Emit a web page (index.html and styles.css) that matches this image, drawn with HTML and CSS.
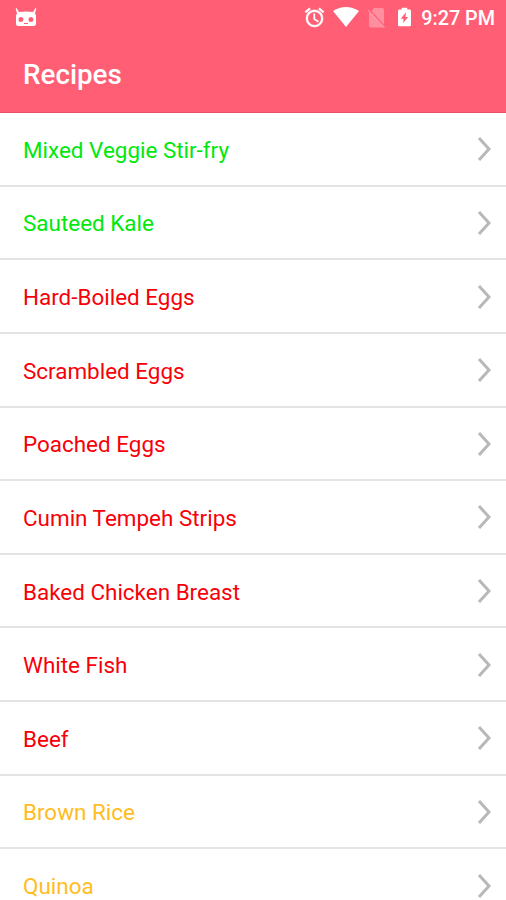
FILE: index.html
```html
<!DOCTYPE html>
<html lang="en">
<head>
<meta charset="utf-8">
<title>Recipes</title>
<link rel="stylesheet" href="styles.css">
</head>
<body>
<header class="header">
  <div class="status">
    <svg class="robot" width="22" height="20" viewBox="0 0 22 20"><path fill="#fff" fill-rule="evenodd" d="M1.500 0L4 4q7-1 14 0l2.500-4 .8.500-1.300 5q1 1 1 3v7q0 2.500-2.500 2.500h-15Q1 18 1 15.500v-7q0-2 1-3L.7.500zM6 9a2.500 2.500 0 100 5 2.500 2.500 0 000-5zm10 0a2.500 2.500 0 100 5 2.500 2.500 0 000-5zM9 15v1h4v-1z"/></svg>
    <div class="status-right">
      <svg class="alarm" width="23" height="23" viewBox="0 0 24 24" fill="#fff"><path stroke="#fff" stroke-width=".4" d="M12 4a9 9 0 100 18 9 9 0 000-18zm0 16a7 7 0 110-14 7 7 0 010 14zM22 5.700l-4.600-3.900-1.300 1.500 4.600 3.900zM7.900 3.400L6.600 1.900 2 5.700l1.300 1.500zM12.500 8H11v6l4.700 2.900.8-1.200-4-2.400z"/></svg>
      <svg class="wifi" width="26" height="20" viewBox="0 0 26 20"><path fill="#fff" d="M0 4Q13-4 26 4L13 20z"/></svg>
      <svg class="sim" width="18" height="20" viewBox="0 0 18 20"><path fill="#fff" opacity=".3" d="M7 0h8q2 0 2 2v14.500L4.500 3zM3 4.500L17 19.500H4q-2 0-2-2V5.500z"/><path d="M1 2l16.500 17.500" stroke="#fff" stroke-opacity=".25" stroke-width="1.500"/></svg>
      <svg class="battery" width="13" height="20" viewBox="0 0 14 20"><path fill="#fff" fill-rule="evenodd" d="M4 0h6v2h2.500q1.500 0 1.500 1.500v15q0 1.500-1.500 1.500h-11Q0 20 0 18.500v-15Q0 2 1.500 2H4zM8.500 5l-5.500 7h3l-.5 4.500L11 10H8z"/></svg>
      <span class="time">9:27 PM</span>
    </div>
  </div>
  <h1>Recipes</h1>
</header>
<ul class="list"></ul>
<script src="script.js"></script>
</body>
</html>
```
FILE: styles.css
```css
* { box-sizing: border-box; }
body { margin: 0; height: 900px; overflow: hidden; background: #fff; font-family: Roboto, sans-serif; }
.header { height: 113px; background: #ff5e75; color: #fff; border-bottom: 1px solid #e8506a; }
.status { height: 36px; padding: 0 11px 0 15px; display: flex; align-items: center; justify-content: space-between; }
.status-right { display: flex; align-items: center; }
.robot { margin-top: -1px; }
.alarm { margin-top: -1px; margin-right: -1px; }
.wifi, .battery { margin-top: -2px; }
.wifi { margin-left: 8px; }
.sim { margin-left: 8px; }
.battery { margin-left: 13px; margin-right: 10px; }
.time { font-size: 19.800px; font-weight: 500; }
h1 { margin: 0; padding-left: 23px; font-size: 27.800px; line-height: 78px; font-weight: 500; }
.list { list-style: none; margin: 0; padding: 0; }
.row { height: 73.630px; padding: 2px 15px 0 23px; border-bottom: 2px solid #e4e4e4; display: flex; align-items: center; justify-content: space-between; font-size: 22.450px; }
.row svg { margin-top: -1px; }
.green { color: #00e80c; }
.red { color: #f80008; }
.amber { color: #ffbd22; }
```
FILE: script.js
```js
const recipes = [
  ["Mixed Veggie Stir-fry", "green"], ["Sauteed Kale", "green"],
  ["Hard-Boiled Eggs", "red"], ["Scrambled Eggs", "red"], ["Poached Eggs", "red"],
  ["Cumin Tempeh Strips", "red"], ["Baked Chicken Breast", "red"],
  ["White Fish", "red"], ["Beef", "red"], ["Brown Rice", "amber"], ["Quinoa", "amber"]
];
document.querySelector(".list").innerHTML = recipes.map(([name, color]) =>
  `<li class="row ${color}"><span>${name}</span><svg width="14" height="26" viewBox="0 0 14 26"><path d="M2 2l10 11L2 24" fill="none" stroke="#b8b8b8" stroke-width="3"/></svg></li>`
).join("");
```
